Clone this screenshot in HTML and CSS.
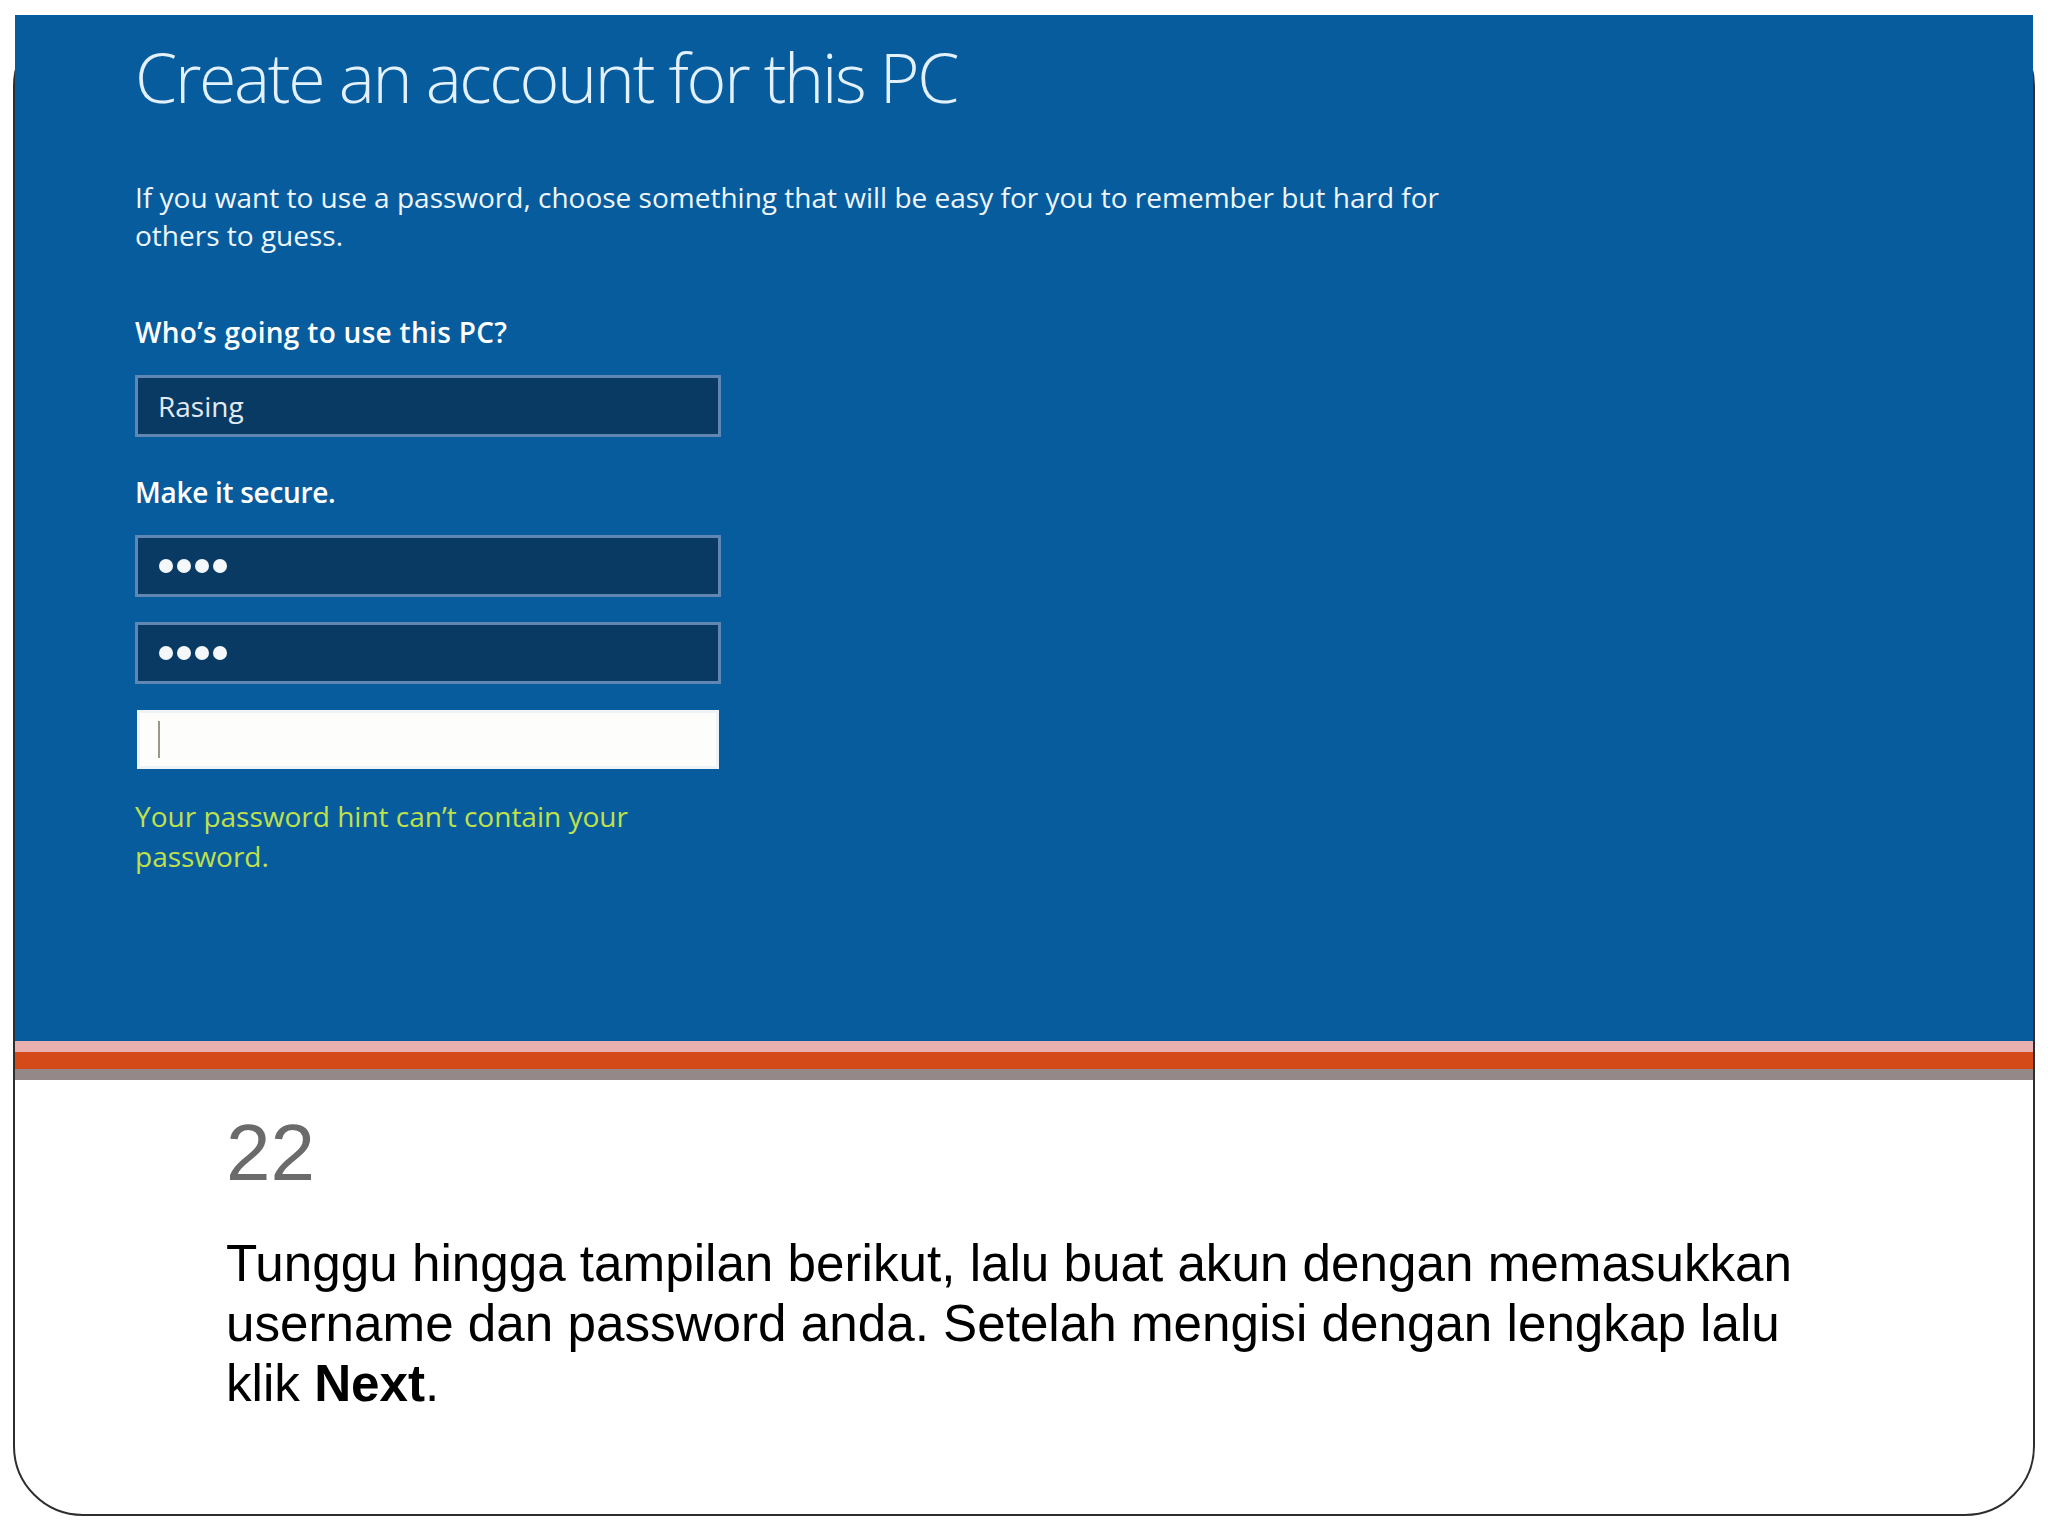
FILE: index.html
```html
<!DOCTYPE html>
<html lang="id">
<head>
    <meta charset="UTF-8">
    <title>Slide 22 - Create an account</title>
    <link rel="stylesheet" href="styles.css">
</head>
<body>
    <div class="slide">
        <!-- Screenshot: Windows setup -->
        <section class="screen">
            <h1 class="screen-title">Create an account for this PC</h1>
            <p class="screen-desc">If you want to use a password, choose something that will be easy for you to remember but hard for<br>others to guess.</p>

            <div class="field-label">Who’s going to use this PC?</div>
            <div class="field">Rasing</div>

            <div class="field-label label-secure">Make it secure.</div>
            <div class="field field-pw">
                <span class="dot"></span><span class="dot"></span><span class="dot"></span><span class="dot"></span>
            </div>
            <div class="field field-pw field-confirm">
                <span class="dot"></span><span class="dot"></span><span class="dot"></span><span class="dot"></span>
            </div>
            <div class="field field-hint"><span class="caret"></span></div>

            <p class="hint-error">Your password hint can’t contain your<br>password.</p>
        </section>

        <!-- Divider stripes -->
        <div class="stripes">
            <div class="stripe stripe-pink"></div>
            <div class="stripe stripe-orange"></div>
            <div class="stripe stripe-gray"></div>
        </div>

        <!-- Caption -->
        <div class="caption">
            <div class="slide-num">22</div>
            <p class="caption-text">Tunggu hingga tampilan berikut, lalu buat akun dengan memasukkan username dan password anda. Setelah mengisi dengan lengkap lalu klik <b>Next</b>.</p>
        </div>
    </div>
</body>
</html>
```

FILE: styles.css
```css
:root {
    --color-screen: #075c9e;
    --color-field: #083a64;
    --color-field-border: #5f87b1;
    --color-hint: #c0e14a;
    --color-frame: #2e2e2e;
    --color-num: #6b6b6b;
}

body {
    margin: 0;
    background: #fff;
    font-family: "Liberation Sans", Arial, sans-serif;
}

/* Slide frame */
.slide {
    box-sizing: border-box;
    width: 2022px;
    height: 1500px;
    margin: 16px 0 0 13px;
    border: 2px solid var(--color-frame);
    border-radius: 70px;
}

/* Screenshot area */
.screen {
    box-sizing: border-box;
    height: 1026px;
    margin-top: -3px;
    padding: 22px 0 0 120px;
    background: var(--color-screen);
    color: #eef6fc;
    font-family: "Open Sans", "Noto Sans", sans-serif;
}

.screen-title {
    margin: 0;
    font-size: 68px;
    font-weight: 300;
    line-height: 80px;
    letter-spacing: -2.3px;
    color: #e2f1fb;
}

.screen-desc {
    margin: 61px 0 0;
    font-size: 28px;
    line-height: 38px;
}

.field-label {
    margin-top: 59px;
    font-size: 28px;
    font-weight: 600;
    line-height: 38px;
    letter-spacing: 0.3px;
    color: #fff;
}

.label-secure {
    margin-top: 36px;
    letter-spacing: -0.3px;
}

.field {
    box-sizing: border-box;
    width: 586px;
    height: 62px;
    margin-top: 24px;
    padding-left: 20px;
    display: flex;
    align-items: center;
    background: var(--color-field);
    border: 3px solid var(--color-field-border);
    font-size: 28px;
    color: #e2ebf3;
}

.field-pw {
    gap: 4px;
    padding-left: 21px;
}

.field-confirm {
    margin-top: 25px;
}

.dot {
    width: 14px;
    height: 14px;
    border-radius: 50%;
    background: #f4f8fb;
}

.field-hint {
    width: 582px;
    height: 59px;
    margin: 26px 0 0 2px;
    padding-left: 18px;
    background: #fdfdfb;
    border-color: #eef3f7;
}

.caret {
    width: 2px;
    height: 37px;
    background: #9c9888;
}

.hint-error {
    margin: 27px 0 0;
    font-size: 28px;
    line-height: 40px;
    color: var(--color-hint);
}

/* Stripes */
.stripe-pink {
    height: 11px;
    background: #e9b0b0;
}

.stripe-orange {
    height: 17px;
    background: #d44a19;
}

.stripe-gray {
    height: 11px;
    background: #948888;
}

/* Caption */
.caption {
    padding-left: 211px;
}

.slide-num {
    margin-top: 25px;
    font-size: 80px;
    line-height: 96px;
    color: var(--color-num);
}

.caption-text {
    width: 1620px;
    margin: 33px 0 0;
    font-size: 51.2px;
    line-height: 60px;
    color: #000;
}
```
